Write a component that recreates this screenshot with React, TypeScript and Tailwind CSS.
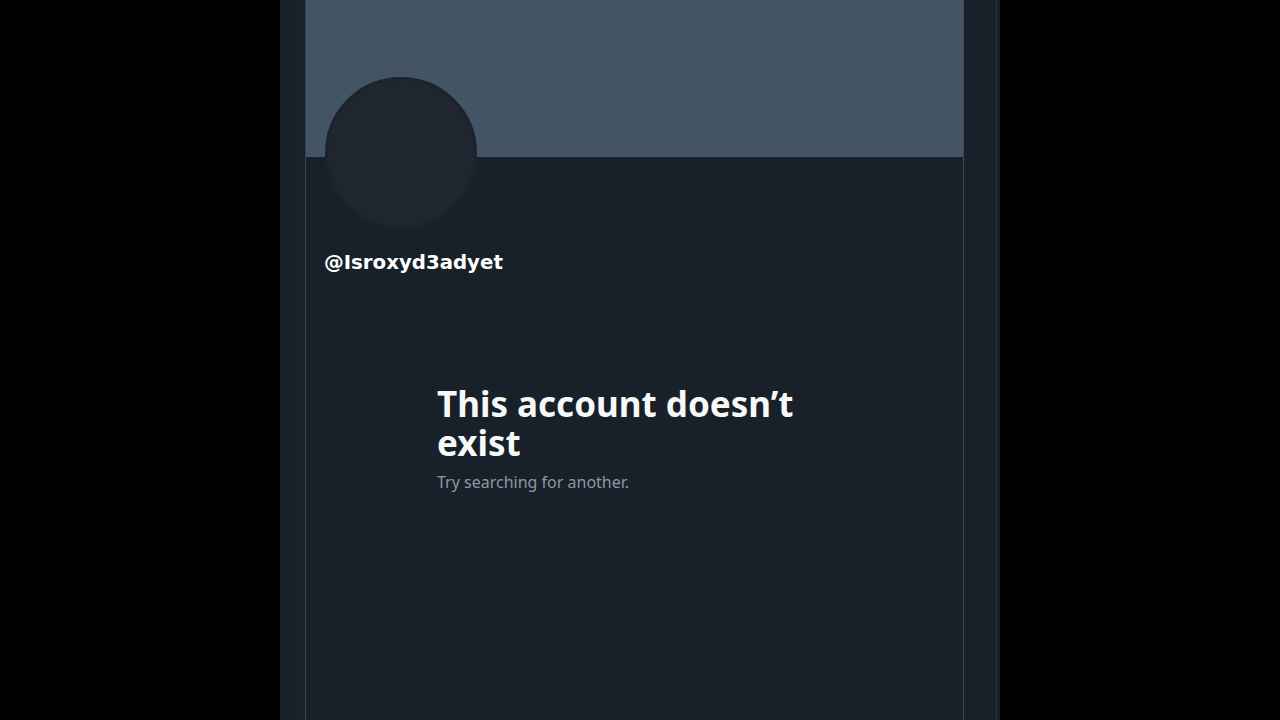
import React from "react";

export default function App() {
  return (
    <div className="flex h-[720px] w-[1280px] overflow-hidden bg-black">
      <div className="w-[280px] shrink-0 bg-black" />
      <div className="flex h-full w-[720px] shrink-0 bg-[#18202a]">
        <div className="h-full w-[18px] shrink-0" />
        <div className="h-full w-[7px] shrink-0 border-l border-[#1d2833]" />
        <div className="flex h-full w-[659px] shrink-0 flex-col border-x border-[#3a4650]">
          <div className="h-[157px] w-full shrink-0 bg-[#435565]" />
          <div className="relative flex flex-col px-[18px]">
            <div className="absolute left-[19px] top-[-80px] h-[152px] w-[152px] rounded-full border-[3px] border-[#1c232c] bg-[#1f2630]" />
            <div className="h-[94px]" />
            <div
              className="text-[19.75px] font-bold leading-[24px] text-white"
              style={{ fontFamily: '"DejaVu Sans", Verdana, sans-serif' }}
            >
              @Isroxyd3adyet
            </div>
          </div>
          <div className="mt-[109px] ml-[131px] flex w-[400px] flex-col">
            <div
              className="text-[35px] font-bold leading-[39px] text-[#f7f9f9]"
              style={{ fontFamily: '"Noto Sans", "Open Sans", sans-serif' }}
            >
              This account doesn’t exist
            </div>
            <div
              className="mt-[9px] text-[16px] leading-[22px] text-[#8b98a5]"
              style={{ fontFamily: '"Noto Sans", "Open Sans", sans-serif' }}
            >
              Try searching for another.
            </div>
          </div>
        </div>
        <div className="h-full w-[33px] shrink-0 border-r border-[#2a3640]" />
      </div>
      <div className="flex-1 bg-black" />
    </div>
  );
}
